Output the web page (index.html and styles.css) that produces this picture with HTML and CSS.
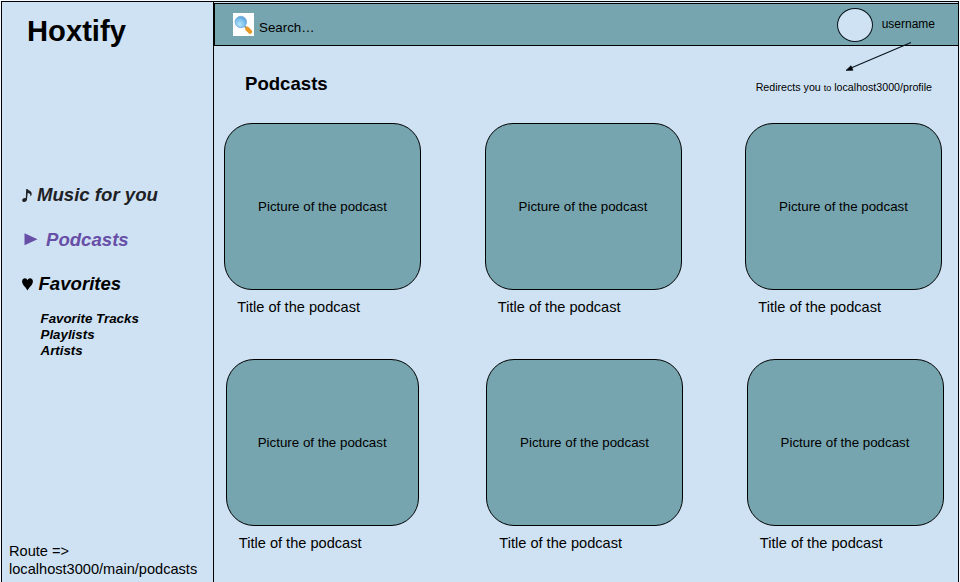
FILE: index.html
```html
<!DOCTYPE html>
<html lang="en">
<head>
<meta charset="utf-8">
<title>Hoxtify</title>
<link rel="stylesheet" href="styles.css">
</head>
<body>
<div class="frame">
  <aside class="sidebar">
    <h1 class="brand">Hoxtify</h1>
    <nav class="nav">
      <a class="nav-item music"><svg class="note" width="11" height="15" viewBox="0 0 11 15"><path d="M4.200 1h1.300c.3 1.500 4.200 1.700 4.200 4.800 0 1.300-.6 2.200-1.300 2.800.5-2.300-.9-3.300-2.700-3.500L5 11.600c-.1 1.400-1.400 2.500-2.800 2.500-1.200 0-2.100-.8-2-1.900.1-1.200 1.400-2.100 2.800-2.100.3 0 .6 0 .8.1z"/></svg><span>Music for you</span></a>
      <a class="nav-item active"><svg class="play" width="14" height="13" viewBox="0 0 14 13"><path d="M.5.3 13.500 6.300.5 12.300z"/></svg><span>Podcasts</span></a>
      <a class="nav-item favorites"><svg class="heart" width="11" height="13" viewBox="0 0 11 13"><path d="M5.500 12.500C4.400 9.500.1 7 .1 3.400.1 1.600 1.300.3 2.900.3c1.300 0 2.200.8 2.600 2.300C5.900 1.100 6.800.3 8.100.3c1.600 0 2.800 1.300 2.800 3.100 0 3.600-4.300 6.100-5.400 9.100z"/></svg><span>Favorites</span></a>
    </nav>
    <ul class="subnav"><li>Favorite Tracks</li><li>Playlists</li><li>Artists</li></ul>
    <p class="route">Route =&gt;<br>localhost3000/main/podcasts</p>
  </aside>
  <main class="main">
    <header class="topbar">
      <svg class="search-icon" width="21" height="23" viewBox="0 0 21 23">
        <defs><radialGradient id="lens" cx=".4" cy=".7" r=".75"><stop offset="0" stop-color="#b4e4fa"/><stop offset=".65" stop-color="#75bceb"/><stop offset="1" stop-color="#4a91d2"/></radialGradient></defs>
        <path fill="#fff" d="M0 0h21v23H0z"/>
        <path d="m11.500 13 2.300 2.300" stroke="#8b98a6" stroke-width="2"/>
        <path d="m14.200 15.800 2.900 3" stroke="#e99a24" stroke-width="4.200" stroke-linecap="round"/>
        <circle cx="7.800" cy="9" r="5.700" fill="url(#lens)" stroke="#80b2dc"/>
      </svg>
      <span class="search">Search…</span>
      <span class="avatar"></span>
      <span class="username">username</span>
      <svg class="arrow" width="68" height="32" viewBox="0 0 68 32"><path d="M66 1.500 6 27" fill="none" stroke="#07131b" stroke-width="1.100"/><path d="m1 29.400 5-4.700 2 4.500z" stroke="#07131b" stroke-width=".7"/></svg>
    </header>
    <div class="heading">
      <h2 class="title">Podcasts</h2>
      <p class="note-text">Redirects you <small>to</small> localhost3000/profile</p>
    </div>
    <section class="row">
      <article class="podcast"><div class="picture">Picture of the podcast</div><p class="name">Title of the podcast</p></article>
      <article class="podcast"><div class="picture">Picture of the podcast</div><p class="name">Title of the podcast</p></article>
      <article class="podcast"><div class="picture">Picture of the podcast</div><p class="name">Title of the podcast</p></article>
    </section>
    <section class="row second">
      <article class="podcast narrow"><div class="picture">Picture of the podcast</div><p class="name">Title of the podcast</p></article>
      <article class="podcast"><div class="picture">Picture of the podcast</div><p class="name">Title of the podcast</p></article>
      <article class="podcast"><div class="picture">Picture of the podcast</div><p class="name">Title of the podcast</p></article>
    </section>
  </main>
</div>
</body>
</html>
```
FILE: styles.css
```css
* { box-sizing: border-box; }
body { margin: 0; padding: 1px 0 0 1px; background: #f4f9fd; color: #000; font-family: "Liberation Sans", Arial, sans-serif; overflow: hidden; }
h1, h2, p, ul { margin: 0; padding: 0; }
.frame { display: flex; height: 581px; width: 958px; background: #cfe2f3; }
.sidebar { width: 213px; border: solid #000; border-width: 1px 1px 0; display: flex; flex-direction: column; }
.brand { margin: 12px 0 0 25px; font-size: 29.2px; line-height: 34px; }
.nav { margin: 136px 0 0 20px; display: flex; flex-direction: column; gap: 22.6px; }
.nav-item { display: flex; align-items: center; height: 22px; font-size: 18.6px; line-height: 22px; font-weight: bold; font-style: italic; }
.music { color: #202124; }
.active { color: #674ea7; }
.nav svg { fill: currentColor; }
.note { margin-right: 4px; }
.play { margin: 0 8px 0 2px; }
.heart { margin-right: 5.5px; }
.subnav { margin: 16px 0 0 38.5px; list-style: none; font-size: 13.33px; line-height: 16px; font-weight: bold; font-style: italic; }
.route { margin: auto 0 4px 7px; font-size: 14.6px; line-height: 17.5px; white-space: nowrap; }
.main { width: 745px; border: solid #000; border-width: 1px 1px 0 0; padding-top: 1px; }
.topbar { position: relative; display: flex; align-items: center; width: 745px; height: 43px; border: 1px solid #000; background: #76a5af; }
.search-icon { margin-left: 18px; }
.search { margin: 5px auto 0 5px; font-size: 13.33px; line-height: 17px; }
.avatar { width: 36px; height: 34px; border: 1px solid #07131b; border-radius: 50%; background: #cfe2f3; }
.username { margin: 0 23px 0 9px; font-size: 12px; line-height: 15px; }
.arrow { position: absolute; left: 630px; top: 37px; }
.heading { display: flex; justify-content: space-between; align-items: center; height: 77px; padding: 0 26px 0 31px; }
.title { margin-top: -2px; font-size: 18.6px; line-height: 22px; }
.note-text { margin-top: 7px; font-size: 10.67px; line-height: 13px; }
.note-text small { font-size: 9px; }
.row { display: flex; gap: 63.5px; padding-left: 10px; }
.second { margin-top: 43px; padding-left: 11.5px; }
.podcast { flex: 0 0 197px; }
.picture { display: flex; align-items: center; justify-content: center; height: 167px; border: 1px solid #000; border-radius: 28px; background: #76a5af; font-size: 13.33px; padding-bottom: 1px; }
.narrow .picture { width: 193.4px; }
.name { margin: 9px 0 0 13.3px; font-size: 14.6px; line-height: 17px; }
```
